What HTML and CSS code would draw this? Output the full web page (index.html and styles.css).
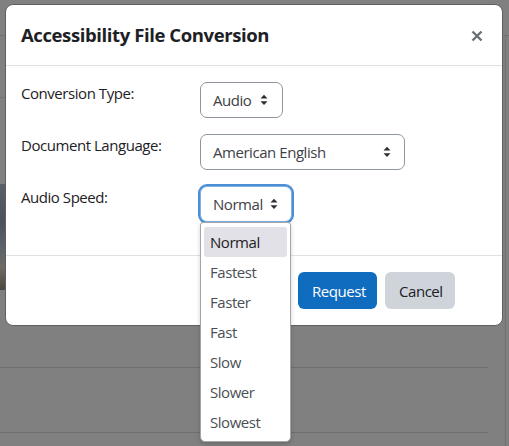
FILE: index.html
```html
<!DOCTYPE html>
<html lang="en">
<head>
<meta charset="utf-8">
<title>Accessibility File Conversion</title>
<link rel="stylesheet" href="styles.css">
</head>
<body>
<div class="bg">
  <div class="bg-top"></div>
  <div class="bg-main">
    <div class="bg-hero">
      <div class="bg-sub"></div>
      <div class="bg-strip"></div>
    </div>
    <div class="bg-row"></div>
    <div class="bg-row"></div>
  </div>
</div>

<div class="modal" role="dialog" aria-labelledby="modal-title">
  <div class="modal-header">
    <h5 class="modal-title" id="modal-title">Accessibility File Conversion</h5>
    <span class="close" aria-label="Close">
      <svg width="12" height="12" viewBox="0 0 12 12"><path d="M1.5 1.5 L10.5 10.5 M10.5 1.5 L1.5 10.5" stroke="#6b6f73" stroke-width="2.4" stroke-linecap="butt"/></svg>
    </span>
  </div>
  <div class="modal-body">
    <div class="form-row">
      <label class="form-label">Conversion Type:</label>
      <div class="select select-type">
        <span>Audio</span>
        <svg class="arrow" width="8" height="12" viewBox="0 0 8 12"><path d="M0.5 4.5 L4 0.8 L7.5 4.5 Z M0.5 7.3 L7.5 7.3 L4 11 Z" fill="#2b2f33"/></svg>
      </div>
    </div>
    <div class="form-row">
      <label class="form-label">Document Language:</label>
      <div class="select select-lang">
        <span>American English</span>
        <svg class="arrow" width="8" height="12" viewBox="0 0 8 12"><path d="M0.5 4.5 L4 0.8 L7.5 4.5 Z M0.5 7.3 L7.5 7.3 L4 11 Z" fill="#2b2f33"/></svg>
      </div>
    </div>
    <div class="form-row">
      <label class="form-label">Audio Speed:</label>
      <div class="select-wrap">
        <div class="select select-speed focused">
          <span>Normal</span>
          <svg class="arrow" width="8" height="12" viewBox="0 0 8 12"><path d="M0.5 4.5 L4 0.8 L7.5 4.5 Z M0.5 7.3 L7.5 7.3 L4 11 Z" fill="#2b2f33"/></svg>
        </div>
        <ul class="listbox" role="listbox">
          <li class="option selected">Normal</li>
          <li class="option">Fastest</li>
          <li class="option">Faster</li>
          <li class="option">Fast</li>
          <li class="option">Slow</li>
          <li class="option">Slower</li>
          <li class="option">Slowest</li>
        </ul>
      </div>
    </div>
  </div>
  <div class="modal-footer">
    <button class="btn btn-primary">Request</button>
    <button class="btn btn-secondary">Cancel</button>
  </div>
</div>
</body>
</html>
```

FILE: styles.css
```css
* { box-sizing: border-box; }

html, body {
  margin: 0;
  padding: 0;
}

body {
  width: 509px;
  height: 446px;
  overflow: hidden;
  position: relative;
  background: #808080;
  font-family: "Open Sans", "Noto Sans", sans-serif;
  font-size: 15px;
  letter-spacing: -0.45px;
  color: #1d2125;
}

/* background page (dimmed) */
.bg {
  display: flex;
  flex-direction: column;
}
.bg > *, .bg-main > *, .bg-hero > * { flex: none; }
.bg-top {
  height: 36px;
  border-bottom: 1px solid #717171;
}
.bg-main {
  width: 506px;
  border-right: 1px solid #727272;
  height: 410px;
  display: flex;
  flex-direction: column;
}
.bg-hero {
  height: 331px;
  display: flex;
  flex-direction: column;
}
.bg-sub {
  height: 62px;
  width: 6px;
  border-bottom: 1px solid #737373;
}
.bg-strip {
  margin-top: 86px;
  width: 6px;
  height: 106px;
  background: linear-gradient(180deg, #5a6068 0%, #4b525b 35%, #5d636b 60%, #6f6a63 78%, #4d4740 100%);
}
.bg-row {
  width: 488px;
  height: 65px;
  border-top: 1px solid #6e6e6e;
}
.bg-row:last-child { height: 14px; }

/* modal */
.modal {
  position: absolute;
  left: 5px;
  top: 4px;
  width: 498px;
  background: #fff;
  border: 1px solid #5f5f5f;
  border-radius: 8px;
  display: flex;
  flex-direction: column;
}

.modal-header {
  display: flex;
  align-items: center;
  justify-content: space-between;
  padding: 16px 19px 16px 15px;
  border-bottom: 1px solid #dee2e6;
}
.modal-title {
  margin: 0;
  font-size: 18.5px;
  line-height: 28px;
  font-weight: 700;
  letter-spacing: -0.4px;
  color: #1d2125;
}
.close {
  display: flex;
  width: 12px;
  height: 12px;
  margin-top: 1px;
}

.modal-body {
  padding: 16px 15px 33px;
  display: flex;
  flex-direction: column;
  gap: 16px;
}

.form-row {
  display: flex;
  align-items: flex-start;
}
.form-label {
  width: 179px;
  flex: none;
  line-height: 22px;
  padding-top: 0;
}

.select {
  height: 36px;
  display: flex;
  align-items: center;
  justify-content: space-between;
  padding: 0 14px 0 12px;
  border: 1px solid #8f959e;
  border-radius: 7px;
  color: #3d4246;
  background: #fff;
}
.select .arrow { flex: none; }
.select-type { width: 83px; }
.select-lang { width: 205px; padding-right: 13px; }
.select-speed { width: 92px; padding-right: 13px; }

.select.focused {
  border-color: #7fb0e3;
  box-shadow: 0 0 0 2px #4c8fd7;
}

.select-wrap {
  position: relative;
}

.listbox {
  position: absolute;
  left: 0;
  top: 36px;
  width: 91px;
  margin: 0;
  padding: 4px 3px;
  list-style: none;
  background: #fff;
  border: 1px solid #a5a5a5;
  border-radius: 3px 3px 5px 5px;
  box-shadow: 0 2px 4px rgba(0, 0, 0, 0.18);
  z-index: 2;
}
.option {
  height: 30px;
  line-height: 30px;
  padding-left: 6px;
  border-radius: 3px;
  color: #4a4f55;
}
.option.selected {
  background: #e1e1e7;
  color: #1d2125;
}

.modal-footer {
  display: flex;
  justify-content: flex-end;
  gap: 8px;
  padding: 16px 47px 16px 15px;
  border-top: 1px solid #dee2e6;
}

.btn {
  font-family: inherit;
  font-size: 15px;
  letter-spacing: -0.45px;
  height: 37px;
  padding: 0 13px;
  border: 1px solid transparent;
  border-radius: 6px;
  line-height: 22px;
}
.btn-primary {
  background: #0f6cbf;
  color: #fff;
  width: 79px;
}
.btn-secondary {
  background: #ced4da;
  color: #1d2125;
  width: 70px;
}
```
